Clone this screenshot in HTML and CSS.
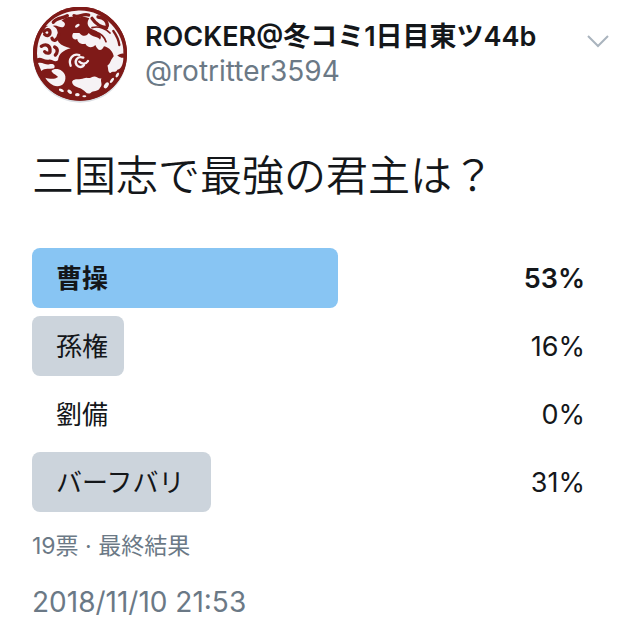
FILE: index.html
```
<!DOCTYPE html>
<html lang="ja">
<head>
    <meta charset="UTF-8">
    <meta name="viewport" content="width=device-width, initial-scale=1.0">
    <title>三国志で最強の君主は？</title>
    <link rel="stylesheet" href="styles.css">
</head>
<body>
    <article class="tweet">
        <header class="tweet-header">
            <svg class="avatar" viewBox="24 20 288 288" role="img" aria-label="ROCKER">
                <circle cx="168" cy="166" r="141" fill="#dcdfe4"/>
                <circle cx="168" cy="160" r="141" fill="#7f1a18"/>
                <!-- Light areas around the dragon -->
                <g fill="#f6f2f5">
                    <path d="M66 76 C88 50 118 34 158 31 C200 28 236 44 262 72 C286 98 300 128 298 160 C288 158 278 168 270 172 C268 154 256 142 240 138 C230 158 220 148 214 134 C202 146 190 140 184 130 C172 134 160 126 160 116 C148 122 140 108 148 98 L166 98 C178 112 190 106 194 98 C206 112 222 108 228 118 C236 108 226 96 212 90 C190 84 186 68 196 54 C176 44 160 56 152 50 C134 46 120 54 112 62 C124 64 126 74 118 80 C108 84 96 70 84 78 Z"/>
                    <path d="M66 80 C80 72 98 78 100 92 C104 102 98 116 104 126 C112 136 126 140 140 144 C118 150 104 160 102 180 C92 188 84 176 74 178 C60 180 50 168 40 174 C36 132 48 102 66 80 Z"/>
                    <path d="M42 188 C56 184 66 196 76 192 C88 188 96 196 90 204 C78 208 62 202 52 212 Z"/>
                    <path d="M82 212 C94 200 120 208 124 228 C126 246 116 258 100 258 C84 256 72 246 64 232 C76 236 92 238 102 230 C96 222 88 222 82 212 Z"/>
                    <!-- Clouds -->
                    <path d="M144 244 C152 232 168 240 180 234 C190 228 194 238 204 230 C216 224 222 236 232 234 C228 246 238 252 228 262 C222 276 208 268 200 278 C188 284 184 272 176 268 C170 260 146 262 144 244 Z"/>
                    <path d="M272 166 C280 158 284 174 298 172 C298 190 292 206 280 208 C274 220 266 210 260 218 C250 216 254 202 250 196 C260 190 260 174 272 166 Z"/>
                    <!-- Spots along the rim -->
                    <ellipse cx="112" cy="270" rx="8" ry="4" transform="rotate(25 112 270)"/>
                    <ellipse cx="137" cy="274" rx="8" ry="5" transform="rotate(40 137 274)"/>
                    <ellipse cx="160" cy="283" rx="7" ry="5"/>
                    <ellipse cx="181" cy="288" rx="6" ry="3"/>
                    <ellipse cx="247" cy="255" rx="6" ry="10" transform="rotate(35 247 255)"/>
                    <ellipse cx="264" cy="240" rx="4" ry="9" transform="rotate(35 264 240)"/>
                    <ellipse cx="280" cy="224" rx="4" ry="8" transform="rotate(30 280 224)"/>
                </g>
                <!-- Swirl on the body -->
                <g fill="none" stroke="#f6f2f5" stroke-width="7" stroke-linecap="round">
                    <path d="M166 164 C146 158 132 178 140 196"/>
                    <path d="M178 172 C160 166 150 182 158 194 C166 204 176 200 180 194"/>
                    <path d="M166 184 C174 192 186 192 192 182"/>
                </g>
                <!-- Mane, horns and leaf curls -->
                <g fill="none" stroke="#7f1a18" stroke-width="10" stroke-linecap="round">
                    <path d="M88 66 C100 50 116 56 130 46"/>
                    <path d="M60 94 C68 84 78 88 78 96 C78 106 68 108 62 102"/>
                    <path d="M104 104 C100 122 88 124 84 114"/>
                    <path d="M52 138 C66 128 80 136 78 154 C76 160 66 160 62 154"/>
                    <path d="M92 140 C104 146 100 158 94 164"/>
                    <path d="M150 46 C164 54 176 38 194 44"/>
                    <path d="M204 54 C216 72 228 80 248 82"/>
                    <path d="M222 50 C238 52 250 62 250 76"/>
                    <path d="M204 82 C224 76 246 84 258 98" stroke-width="5"/>
                    <path d="M216 96 C232 100 242 112 246 124" stroke-width="5"/>
                    <path d="M268 92 C278 106 284 118 286 134" stroke-width="7"/>
                </g>
                <circle cx="168" cy="160" r="138" fill="none" stroke="#7f1a18" stroke-width="6"/>
                <ellipse cx="160" cy="76" rx="8" ry="4" fill="#f6f2f5" transform="rotate(-35 160 76)"/>
            </svg>
            <div class="author">
                <h1 class="author-name">ROCKER@冬コミ1日目東ツ44b</h1>
                <a class="author-handle" href="#">@rotritter3594</a>
            </div>
            <button class="menu-btn" type="button" aria-label="メニュー">
                <svg viewBox="0 0 24 16">
                    <path d="M2 3 L12 13 L22 3"/>
                </svg>
            </button>
        </header>

        <p class="tweet-text">三国志で最強の君主は？</p>

        <ul class="poll">
            <li class="choice winner">
                <div class="choice-bar" style="width: 53%"></div>
                <span class="choice-label">曹操</span>
                <span class="choice-percent">53%</span>
            </li>
            <li class="choice">
                <div class="choice-bar" style="width: 16%"></div>
                <span class="choice-label">孫権</span>
                <span class="choice-percent">16%</span>
            </li>
            <li class="choice">
                <div class="choice-bar" style="width: 0%"></div>
                <span class="choice-label">劉備</span>
                <span class="choice-percent">0%</span>
            </li>
            <li class="choice">
                <div class="choice-bar" style="width: 31%"></div>
                <span class="choice-label">バーフバリ</span>
                <span class="choice-percent">31%</span>
            </li>
        </ul>

        <p class="poll-status">19票 · 最終結果</p>
        <time class="tweet-date" datetime="2018-11-10T21:53">2018/11/10 21:53</time>
    </article>
</body>
</html>
```
FILE: styles.css
```
* {
    margin: 0;
    padding: 0;
    box-sizing: border-box;
}

body {
    font-family: Inter, "Noto Sans CJK JP", sans-serif;
    font-size: 28px;
    color: #14171a;
    background: #fff;
}

.tweet {
    padding: 7px 29px 16px 32px;
}

.tweet-header {
    display: flex;
    align-items: flex-start;
    gap: 17px;
}

.avatar {
    flex: none;
    width: 96px;
    height: 96px;
}

.author {
    flex: 1;
    min-width: 0;
    padding-top: 13px;
}

.author-name {
    font-size: 27px;
    font-weight: 600;
    line-height: 34px;
}

.author-handle {
    display: block;
    color: #6b7986;
    line-height: 34px;
    text-decoration: none;
}

.menu-btn {
    margin-top: 26px;
    border: none;
    background: none;
    cursor: pointer;
}

.menu-btn svg {
    display: block;
    width: 24px;
    height: 16px;
    fill: none;
    stroke: #aab4be;
    stroke-width: 2;
}

.tweet-text {
    margin-top: 40px;
    font-family: "Noto Sans CJK JP", sans-serif;
    font-size: 42px;
    font-weight: 350;
    line-height: 60px;
}

.poll {
    display: grid;
    gap: 8px;
    margin-top: 45px;
    list-style: none;
}

.choice {
    position: relative;
    display: flex;
    align-items: center;
    justify-content: space-between;
    height: 60px;
    padding: 2px 25px 0 24px;
}

/* The bar lies under the label and the percentage */
.choice-bar {
    position: absolute;
    top: 0;
    bottom: 0;
    left: 0;
    border-radius: 8px;
    background: #ccd4dc;
}

.choice-label,
.choice-percent {
    position: relative;
    line-height: 34px;
}

.choice-label {
    font-size: 26px;
}

.choice-percent {
    font-size: 27px;
}

.winner {
    font-weight: 600;
}

.winner .choice-bar {
    background: #88c5f3;
}

.poll-status {
    margin-top: 18px;
    font-size: 23px;
    line-height: 32px;
    color: #6b7986;
}

.tweet-date {
    display: block;
    margin-top: 23px;
    line-height: 34px;
    color: #6b7986;
}
```
